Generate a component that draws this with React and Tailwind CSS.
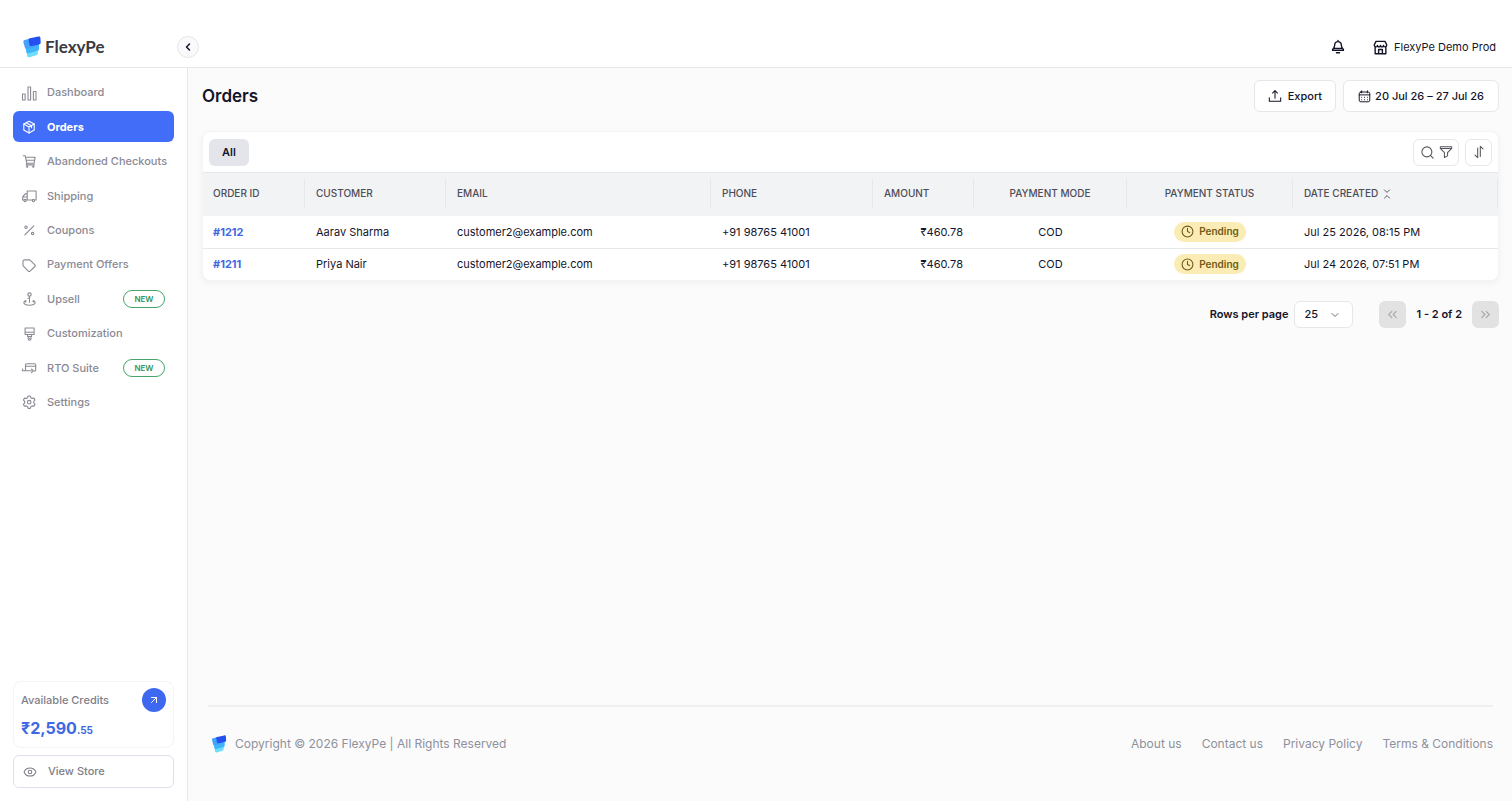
import React, { useState } from 'react';
import { ChevronLeft, ChevronDown, ChevronsLeft, ChevronsRight, ArrowUpRight, Clock, Eye, Search } from 'lucide-react';

const Icon = ({ children, size = 16, width = 1.1, className = '' }) => (
  <svg
    width={size}
    height={size}
    viewBox="0 0 16 16"
    fill="none"
    stroke="currentColor"
    strokeWidth={width}
    strokeLinecap="round"
    strokeLinejoin="round"
    className={`shrink-0 ${className}`}
    aria-hidden="true"
  >
    {children}
  </svg>
);

const LogoMark = ({ className }) => (
  <svg viewBox="0 0 18 22" className={className} aria-hidden="true">
    <path d="M3 12h11.800v5.200c0 1.100-.6 1.800-1.700 2l-6.600 2.100c-1.200.3-2-.1-2.300-1.200z" fill="#6fdcfb" />
    <path d="M1.800 8 16 7v5.900c0 1.100-.6 1.700-1.700 1.900l-8.600 2.400c-1.200.3-2-.1-2.300-1.200z" fill="#3fb4fb" />
    <path d="M.4 6.200c-.2-1.100.3-1.800 1.400-2.100L8 2.200l6.500 5.300-1.200 2.700-9.100 2.600c-1.200.3-2-.1-2.300-1.200z" fill="#45a2fb" />
    <path d="M5.600 4.200c-.1-1 .4-1.600 1.400-1.900L15.400.5c1.200-.2 1.900.3 2 1.400l.3 4.700c0 1-.5 1.600-1.500 1.800l-7.600 1.700c-1.200.2-1.900-.2-2.100-1.300z" fill="#2450f0" />
  </svg>
);

const navItems = [
  {
    label: 'Dashboard',
    icon: (
      <>
        <rect x="1.500" y="9" width="2.600" height="6" />
        <rect x="7" y="2" width="2.600" height="13" />
        <rect x="12.400" y="6.500" width="2.600" height="8.500" />
      </>
    ),
  },
  {
    label: 'Orders',
    active: true,
    icon: (
      <>
        <path d="M8 2.200 13.200 5v6L8 13.900 2.800 11V5z" />
        <path d="M2.800 5 8 8l5.200-3M8 8v5.900M5.300 3.700l5.200 3v2.100" />
      </>
    ),
  },
  {
    label: 'Abandoned Checkouts',
    icon: (
      <>
        <path d="M2.300 2.800h1.900l1.600 7.400h7.300L14.100 4.300H4.600M5.800 10.200l-.6 1.700h8.300M5.300 7.200h8.200" />
        <circle cx="6.200" cy="13.700" r=".6" />
        <circle cx="12.300" cy="13.700" r=".6" />
      </>
    ),
  },
  {
    label: 'Shipping',
    icon: (
      <>
        <path d="M6.200 12V3h8.900v9h-1.300M11.200 12H5.400M6.200 5.900H4.100L1.700 8.800V12h1.100M1.700 9h4.500" />
        <circle cx="4" cy="12.500" r="1.100" />
        <circle cx="12.400" cy="12.500" r="1.100" />
      </>
    ),
  },
  {
    label: 'Coupons',
    icon: (
      <>
        <path d="M12.800 3.800l-9 9" />
        <circle cx="5" cy="5.200" r="1.200" />
        <circle cx="11.600" cy="11.600" r="1.200" />
      </>
    ),
  },
  {
    label: 'Payment Offers',
    icon: <path d="M2 4.500v3.700c0 .4.100.700.400 1l4.900 4.900c.5.500 1.200.5 1.700 0l4.900-4.600c.5-.5.500-1.200 0-1.700L9.300 3.300c-.3-.3-.6-.4-1-.4H3.600C2.700 2.900 2 3.600 2 4.500z" />,
  },
  {
    label: 'Upsell',
    badge: 'NEW',
    icon: (
      <>
        <circle cx="8.500" cy="3.600" r="1.700" />
        <path d="M8.500 5.300v6M6.900 7.300h1.600M4.800 9.600c-1.200.5-1.900 1.200-1.900 2 0 1.500 2.400 2.600 5.600 2.600s5.600-1.100 5.600-2.600c0-.8-.7-1.500-1.900-2M4.800 9.600v1.500M12.200 9.600v1.500" />
      </>
    ),
  },
  {
    label: 'Customization',
    icon: (
      <path d="M4.100 2h9v6.500h-9zM4.100 6.300h9M6.600 8.500v2h4v-2M7.200 10.500v2.300c0 2 2.800 2 2.800 0v-2.300M8.600 12.300v.5" />
    ),
  },
  {
    label: 'RTO Suite',
    badge: 'NEW',
    icon: (
      <path d="M4.500 8V5c0-.8.4-1.200 1.200-1.200h7.800c.8 0 1.200.4 1.200 1.200v4.900c0 .8-.4 1.200-1.200 1.200M4.500 6.300h10.200M1.500 9v1.800h9M4.500 8v2.800M10.500 9l2 1.800-2 1.800" />
    ),
  },
  {
    label: 'Settings',
    icon: (
      <>
        <path d="M7.100 2h2.200l.5 1.700 1.300.8 1.800-.4 1.100 1.900-1.200 1.400V9l1.200 1.400-1.100 1.900-1.800-.4-1.300.8-.5 1.700H7.100l-.5-1.700-1.300-.8-1.800.4-1.100-1.900L3.600 9V7.400L2.400 6l1.100-1.900 1.800.4 1.300-.8z" />
        <circle cx="8.200" cy="8.200" r="1.800" />
      </>
    ),
  },
];

const orders = [
  { id: '#1212', customer: 'Aarav Sharma', email: 'customer2@example.com', phone: '+91 98765 41001', amount: '₹460.78', mode: 'COD', status: 'Pending', date: 'Jul 25 2026, 08:15 PM' },
  { id: '#1211', customer: 'Priya Nair', email: 'customer2@example.com', phone: '+91 98765 41001', amount: '₹460.78', mode: 'COD', status: 'Pending', date: 'Jul 24 2026, 07:51 PM' },
];

const columns = [
  { label: 'ORDER ID', align: 'text-left' },
  { label: 'CUSTOMER', align: 'text-left' },
  { label: 'EMAIL', align: 'text-left' },
  { label: 'PHONE', align: 'text-left' },
  { label: 'AMOUNT', align: 'text-left' },
  { label: 'PAYMENT MODE', align: 'text-center' },
  { label: 'PAYMENT STATUS', align: 'text-center' },
  { label: 'DATE CREATED', align: 'text-left', sortable: true },
];

const footerLinks = ['About us', 'Contact us', 'Privacy Policy', 'Terms & Conditions'];

const Header = () => (
  <header className="flex h-[68px] items-center border-b border-gray-200 bg-white pt-[27px] pr-4 pl-[23px]">
    <a href="#" className="flex w-[154px] items-center gap-1 text-[#3a3a40]">
      <LogoMark className="h-[22px] w-[18px]" />
      <span className="font-['Lato',sans-serif] text-[17px] leading-5 font-bold">FlexyPe</span>
    </a>
    <button type="button" aria-label="Collapse sidebar" className="flex size-[22px] items-center justify-center rounded-full border border-gray-200 bg-[#fafafc]">
      <ChevronLeft size={12} strokeWidth={3} />
    </button>
    <button type="button" aria-label="Notifications" className="ml-auto">
      <Icon width={1.400}>
        <path d="M8 2.600a3.300 3.300 0 0 0-3.300 3.300c0 2.300-.6 3.200-2.100 4.700v.8h10.800v-.8c-1.500-1.500-2.100-2.400-2.100-4.700A3.300 3.300 0 0 0 8 2.600zM8 1.500v1.100M4 9.500h8M6.500 13.700h3" />
      </Icon>
    </button>
    <button type="button" className="ml-[27px] flex items-center gap-[6px] text-[11px]">
      <Icon size={15} width={1.500}>
        <path d="M3.200 1.500h9.600l1.900 3.900c0 2.400-3.400 2.600-3.500.3 0 2.300-3.200 2.300-3.200 0 0 2.300-3.200 2.300-3.200 0-.1 2.300-3.500 2.100-3.500-.3zM2.300 7.800v6.800h11.400V7.800M6 14.600v-4.400h4v4.400" />
      </Icon>
      FlexyPe Demo Prod
    </button>
  </header>
);

const Sidebar = () => (
  <aside className="flex w-[188px] shrink-0 flex-col border-r border-gray-200 bg-white px-[13px] pt-[9px] pb-[13px]">
    <nav className="flex h-[341px] flex-col justify-between">
      {navItems.map((item) => (
        <a
          key={item.label}
          href="#"
          className={`flex h-[31px] items-center gap-[10px] rounded-md pr-[9px] pl-2 text-[11px] whitespace-nowrap ${
            item.active ? 'bg-[#416df9] font-bold text-white' : 'font-medium text-[#8a8a95]'
          }`}
        >
          <Icon>{item.icon}</Icon>
          {item.label}
          {item.badge && (
            <span className="ml-auto flex h-[18px] w-[42px] items-center justify-center rounded-full border border-[#45a56b] text-[8px] font-semibold text-[#2f9658]">
              {item.badge}
            </span>
          )}
        </a>
      ))}
    </nav>

    <div className="mt-auto rounded-lg border border-gray-100 px-[7px] pt-[6px] pb-[7px]">
      <div className="flex items-center justify-between">
        <span className="text-[11px] font-medium text-[#7e7e88]">Available Credits</span>
        <button type="button" aria-label="Add credits" className="flex size-6 items-center justify-center rounded-full bg-[#3f68f0] text-white">
          <ArrowUpRight size={12} />
        </button>
      </div>
      <div className="mt-1 flex items-baseline leading-6 font-bold text-[#3f68e4]">
        <span className="text-base leading-6">₹2,590</span>
        <span className="text-[10px] leading-4">.55</span>
      </div>
    </div>
    <button type="button" className="mt-[7px] flex h-[33px] items-center gap-[11px] rounded-md border border-[#dfe0ea] pl-[9px] text-[11px] font-medium text-[#7e7e88]">
      <Eye size={14} strokeWidth={1.800} />
      View Store
    </button>
  </aside>
);

const OrdersTable = () => (
  <section className="mt-[19px] overflow-hidden rounded-lg border border-gray-100 bg-white shadow-[0_2px_6px_rgba(0,0,0,0.05)]">
    <div className="flex h-10 items-center gap-[6px] px-[6px]">
      <button type="button" className="h-[27px] rounded-md bg-[#e4e5ea] px-[13px] text-[11px] font-semibold">All</button>
      <button type="button" aria-label="Search and filter" className="ml-auto flex h-[27px] w-[46px] items-center justify-center gap-1 rounded-md border border-gray-200 text-[#55555e]">
        <Search size={15} strokeWidth={1.700} />
        <Icon size={14} width={1.200}>
          <path d="M1.500 2h13v1.800L9.800 8.700v3.700l-3.600 1.900V8.700L1.500 3.800zM1.500 4h13" />
        </Icon>
      </button>
      <button type="button" aria-label="Sort" className="flex size-[27px] items-center justify-center rounded-md border border-gray-200 text-[#55555e]">
        <Icon size={14} width={1.200}>
          <path d="M6.500 3.500v11L3.500 11.500M9.500 13V1.500L12.500 4.500" />
        </Icon>
      </button>
    </div>
    <table className="w-full table-fixed border-t border-gray-200 text-[11px]">
      <colgroup>
        <col className="w-[102px]" />
        <col className="w-[141px]" />
        <col className="w-[265px]" />
        <col className="w-[162px]" />
        <col className="w-[101px]" />
        <col className="w-[153px]" />
        <col className="w-[166px]" />
        <col className="w-[205px]" />
      </colgroup>
      <thead className="bg-[#f2f3f5] text-[10px] text-[#4d4d57]">
        <tr>
          {columns.map((col) => (
            <th key={col.label} scope="col" className={`px-0 pt-[6px] pb-2 font-medium first:[&>div]:pl-[10px] ${col.align}`}>
              <div className="flex h-[29px] items-center border-r border-gray-200 px-[11px]">
                <span className="w-full">
                  {col.label}
                  {col.sortable && (
                    <Icon size={10} width={1.500} className="ml-1 inline-block">
                      <path d="M4 1.500 8 5.500 12 1.500M4 14.500 8 10.500 12 14.500" />
                    </Icon>
                  )}
                </span>
              </div>
            </th>
          ))}
        </tr>
      </thead>
      <tbody>
        {orders.map((order) => (
          <tr key={order.id} className="h-8 border-b border-gray-200 last:border-b-0">
            <td className="px-[10px]">
              <a href="#" className="font-bold text-[#3f68e4]">{order.id}</a>
            </td>
            <td className="px-[11px]">{order.customer}</td>
            <td className="px-[11px]">{order.email}</td>
            <td className="px-[11px]">{order.phone}</td>
            <td className="px-[11px] text-right">{order.amount}</td>
            <td className="px-[11px] text-center">{order.mode}</td>
            <td className="px-[11px] text-center">
              <span className="inline-flex h-5 items-center gap-[5px] rounded-full bg-[#fbecb5] px-[7px] align-middle text-[10px] font-semibold text-[#6f5a14]">
                <Clock size={13} />
                {order.status}
              </span>
            </td>
            <td className="px-[11px]">{order.date}</td>
          </tr>
        ))}
      </tbody>
    </table>
  </section>
);

const Pagination = () => {
  const [rows, setRows] = useState('25');

  return (
    <div className="mt-5 flex items-center justify-end text-[11px] font-semibold">
      <label htmlFor="rows">Rows per page</label>
      <div className="relative ml-[6px]">
        <select
          id="rows"
          value={rows}
          onChange={(e) => setRows(e.target.value)}
          className="h-[27px] w-[59px] appearance-none rounded-md border border-gray-200 bg-white pl-[9px] font-medium"
        >
          <option>25</option>
          <option>50</option>
          <option>100</option>
        </select>
        <ChevronDown size={12} className="pointer-events-none absolute top-2 right-3 text-gray-500" />
      </div>
      <button type="button" aria-label="Previous page" disabled className="ml-[26px] flex size-[27px] items-center justify-center rounded-md bg-[#e2e2e3] text-[#a8a8ac]">
        <ChevronsLeft size={15} strokeWidth={1.700} />
      </button>
      <span className="mx-[10px]">1 - 2 of 2</span>
      <button type="button" aria-label="Next page" disabled className="flex size-[27px] items-center justify-center rounded-md bg-[#e2e2e3] text-[#a8a8ac]">
        <ChevronsRight size={15} strokeWidth={1.700} />
      </button>
    </div>
  );
};

const Footer = () => (
  <footer className="mx-[6px] mt-auto flex items-center gap-2 border-t-2 border-[#f0f0f1] pt-[28px] pb-[48px] text-xs text-[#8e919c]">
    <LogoMark className="ml-[3px] h-[18px] w-4" />
    <span>Copyright © 2026 FlexyPe | All Rights Reserved</span>
    <nav className="ml-auto flex gap-5">
      {footerLinks.map((link) => (
        <a key={link} href="#">{link}</a>
      ))}
    </nav>
  </footer>
);

const App = () => (
  <div className="flex min-h-screen flex-col bg-[#fbfbfb] font-['Inter',sans-serif] text-[#14142b]">
    <Header />
    <div className="flex grow">
      <Sidebar />
      <main className="flex min-w-0 grow flex-col pt-3 pr-[13px] pl-[14px]">
        <div className="flex items-center gap-[7px]">
          <h1 className="mr-auto text-[17px] leading-6 font-semibold">Orders</h1>
          <button type="button" className="flex h-8 items-center gap-[6px] rounded-md border border-gray-200 bg-white px-[13px] text-[11px] font-medium">
            <Icon size={14} width={1.200}>
              <path d="M8 10.500V2M5.200 4.600 8 1.800l2.800 2.800M1.500 10v4h13v-4" />
            </Icon>
            Export
          </button>
          <button type="button" className="flex h-8 items-center gap-1 rounded-md border border-gray-200 bg-white px-[14px] text-[11px] font-medium">
            <Icon size={13} width={1.200}>
              <rect x="1.500" y="2.500" width="13" height="12" rx="2" />
              <path d="M1.500 6h13M4.500 1v2.500M11.500 1v2.500M4.500 9h.1M8 9h.1M11.500 9h.1M4.500 12h.1M8 12h.1M11.500 12h.1" />
            </Icon>
            20 Jul 26 – 27 Jul 26
          </button>
        </div>
        <OrdersTable />
        <Pagination />
        <Footer />
      </main>
    </div>
  </div>
);

export default App;
